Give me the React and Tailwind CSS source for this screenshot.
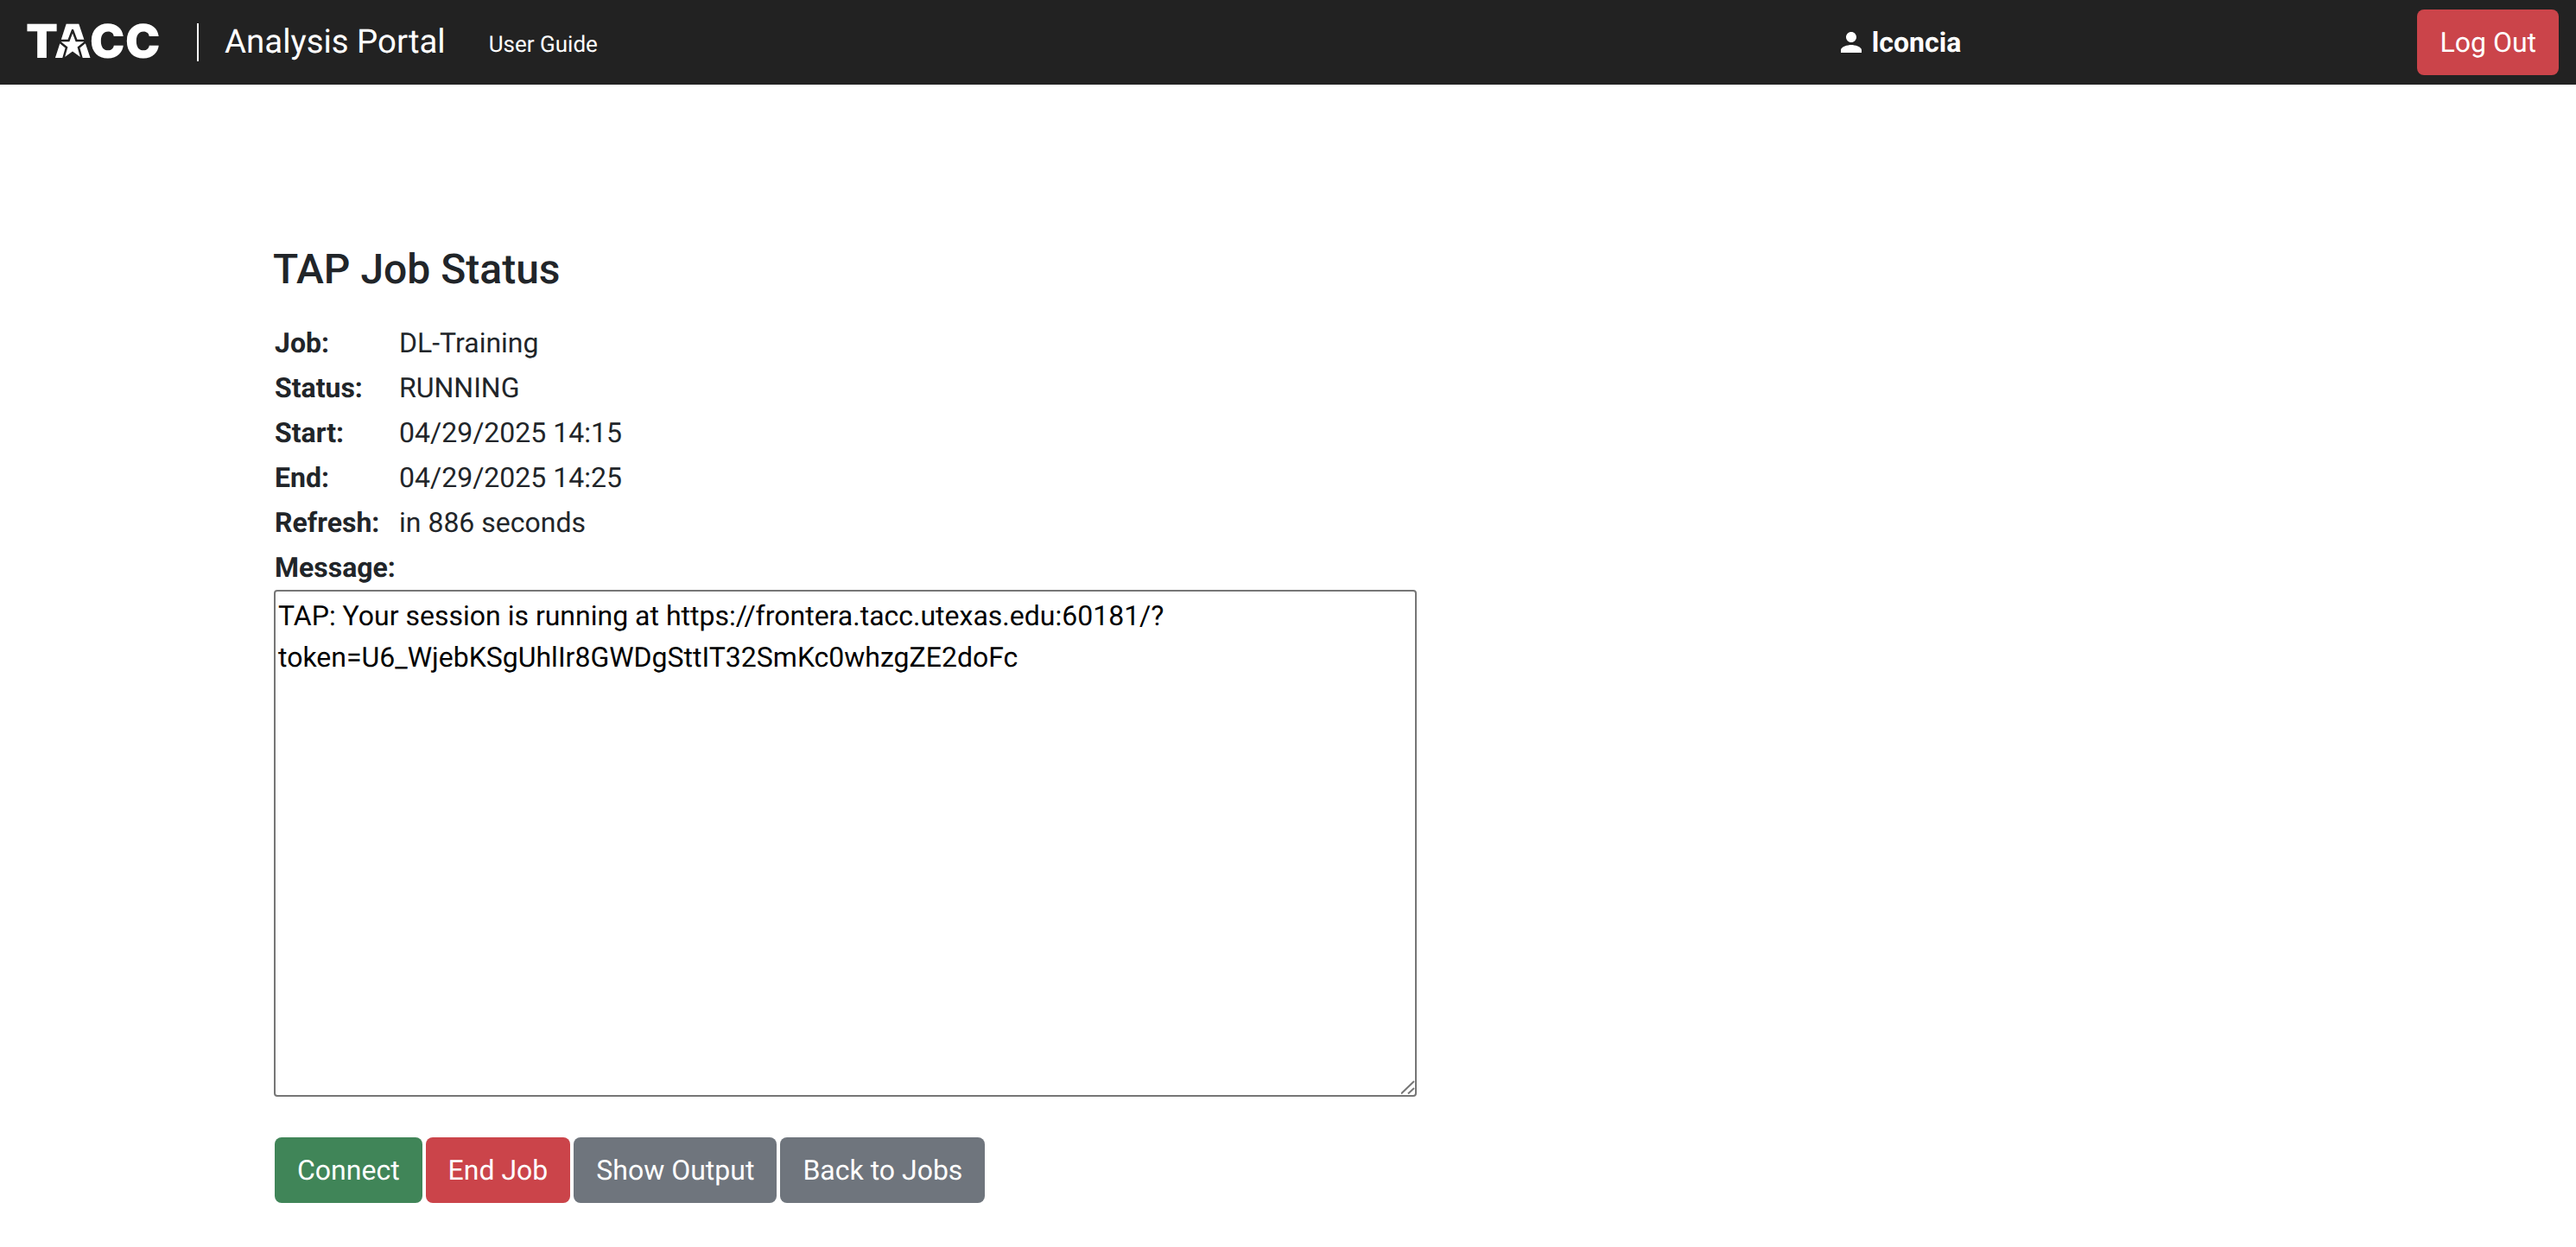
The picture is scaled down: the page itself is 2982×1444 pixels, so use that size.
import React from "react";

const FONT = "font-['Roboto',sans-serif] [text-rendering:geometricPrecision]";

const MESSAGE =
  "TAP: Your session is running at https://frontera.tacc.utexas.edu:60181/?token=U6_WjebKSgUhlIr8GWDgSttIT32SmKc0whzgZE2doFc";

const ROWS = [
  ["Job:", "DL-Training"],
  ["Status:", "RUNNING"],
  ["Start:", "04/29/2025 14:15"],
  ["End:", "04/29/2025 14:25"],
  ["Refresh:", "in 886 seconds"],
];

function Logo() {
  return (
    <div className="relative w-[156px] h-[40px] flex items-center">
      <span className="font-['Inter',sans-serif] font-black text-[54px] leading-[40px] text-white tracking-[0.75px]">
        TACC
      </span>
      {/* star over the A */}
      <svg className="absolute left-[36px] top-[5px] w-[36px] h-[36px]" viewBox="0 0 36 36">
        <polygon
          points="18,1 22.5,13 35,13 25,21 29,35 18,27 7,35 11,21 1,13 13.5,13"
          fill="#fff"
          stroke="#222"
          strokeWidth="2.5"
        />
      </svg>
    </div>
  );
}

function Btn({ color, children }) {
  return (
    <button className={`h-[76px] px-[26px] rounded-[8px] text-white text-[32px] leading-[48px] ${FONT} ${color}`}>
      {children}
    </button>
  );
}

export default function App() {
  return (
    <div className={`min-h-[1444px] bg-white text-[#212529] ${FONT}`}>
      {/* NAVBAR */}
      <nav className="h-[98px] bg-[#222222] flex items-center pl-[30px] pr-[20px] text-white">
        <Logo />
        <div className="w-[2px] h-[44px] bg-white ml-[42px]"></div>
        <span className="ml-[30px] text-[38.4px] leading-[48px]">Analysis Portal</span>
        <a className="ml-[50px] text-[26px] leading-[40px] mt-[6px]">User Guide</a>
        <div className="ml-[1439px] flex items-center gap-[12px]">
          <svg className="w-[24px] h-[24px]" viewBox="4 4 16 16" fill="#fff">
            <path d="M12 12c2.21 0 4-1.79 4-4s-1.79-4-4-4-4 1.79-4 4 1.79 4 4 4zm0 2c-2.67 0-8 1.34-8 4v2h16v-2c0-2.66-5.33-4-8-4z" />
          </svg>
          <span className="text-[32px] leading-[48px] font-bold">lconcia</span>
        </div>
        <div className="flex-1"></div>
        <Btn color="bg-[#cb444a]">Log Out</Btn>
      </nav>

      {/* CONTENT */}
      <main className="pt-[185px] pl-[317px]">
        <h1 className="-ml-[1px] text-[48px] leading-[58px] font-medium">TAP Job Status</h1>

        <div className="mt-[30px] pl-[1px] flex flex-col">
          {ROWS.map(([label, value]) => (
            <div key={label} className="flex h-[52px] items-center text-[32px] leading-[48px]">
              <span className="w-[144px] font-bold">{label}</span>
              <span>{value}</span>
            </div>
          ))}
          <div className="h-[52px] flex items-center text-[32px] leading-[48px] font-bold">Message:</div>
        </div>

        <div className="relative w-[1323px] h-[587px]">
          <textarea
            readOnly
            defaultValue={MESSAGE}
            className={`block w-full h-full resize-none border-2 border-[#767676] rounded-[4px] px-[3px] pt-[4px] pb-[3px] text-[32px] leading-[48px] text-black outline-none ${FONT}`}
          ></textarea>
          {/* resize grip */}
          <svg className="absolute right-[2px] bottom-[3px] w-[16px] h-[16px]" viewBox="0 0 16 16" stroke="#767676" strokeWidth="2">
            <path d="M0 15.5L15 1M8 15.5L15 9" fill="none" />
          </svg>
        </div>

        <div className="mt-[47px] pl-[1px] flex gap-[4px]">
          <Btn color="bg-[#408558]">Connect</Btn>
          <Btn color="bg-[#cb444a]">End Job</Btn>
          <Btn color="bg-[#6f757d]">Show Output</Btn>
          <Btn color="bg-[#6f757d]">Back to Jobs</Btn>
        </div>
      </main>
    </div>
  );
}
